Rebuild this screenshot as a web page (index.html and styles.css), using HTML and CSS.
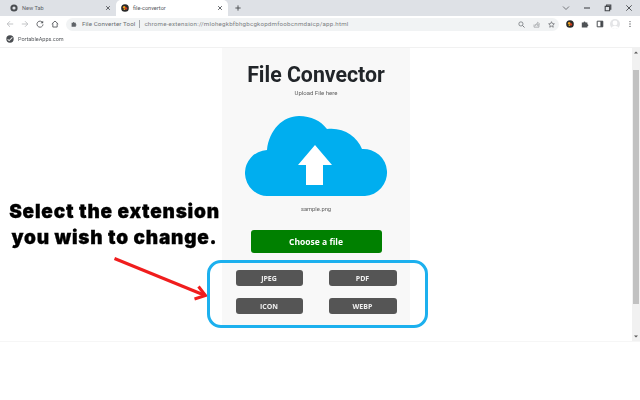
FILE: index.html
```html
<!DOCTYPE html>
<html lang="en">
<head>
<meta charset="utf-8">
<title>file-convertor</title>
<link rel="stylesheet" href="styles.css">
</head>
<body>
<div class="shot">
  <div class="tabstrip">
    <div class="tab">
      <svg class="fav" viewBox="0 0 10 10"><circle cx="5" cy="5" r="4.5" fill="#4a4d51"/><circle cx="5" cy="5" r="2" fill="#dee1e6"/></svg>
      <span class="tab-title">New Tab</span>
      <svg class="tab-x" viewBox="0 0 8 8"><path d="M1.5 1.5l5 5M6.5 1.5l-5 5" stroke="#55585c" stroke-width="1.2"/></svg>
    </div>
    <div class="tab tab-active">
      <svg class="fav" viewBox="0 0 10 10"><circle cx="5" cy="5" r="4.8" fill="#2a2a2a"/><circle cx="4" cy="4" r="1.6" fill="#f0a020"/><circle cx="6.2" cy="5.5" r="1.5" fill="#d63a1e"/><circle cx="4.2" cy="6.6" r="1" fill="#e8c020"/></svg>
      <span class="tab-title">file-convertor</span>
      <svg class="tab-x" viewBox="0 0 8 8"><path d="M1.5 1.5l5 5M6.5 1.5l-5 5" stroke="#55585c" stroke-width="1.2"/></svg>
    </div>
    <svg class="newtab" viewBox="0 0 8 8"><path d="M4 .5v7M.5 4h7" stroke="#44474b" stroke-width="1.2"/></svg>
    <div class="win">
      <svg viewBox="0 0 8 8"><path d="M1 2.5l3 3 3-3" fill="none" stroke="#66696d" stroke-width=".9"/></svg>
      <svg viewBox="0 0 8 8"><path d="M1 4h6" stroke="#44474b" stroke-width="1.1"/></svg>
      <svg viewBox="0 0 8 8"><path d="M1.2 2.4h4.4v4.4H1.2zM2.6 2.2V1h4.2v4.2H5.8" fill="none" stroke="#44474b" stroke-width="1.1"/></svg>
      <svg viewBox="0 0 8 8"><path d="M1.3 1.3l5.4 5.4M6.7 1.3l-5.4 5.4" stroke="#44474b" stroke-width=".9"/></svg>
    </div>
  </div>
  <div class="toolbar">
    <svg class="nav" viewBox="0 0 10 10"><path d="M9 5H1.5M5 1.5L1.5 5 5 8.500" fill="none" stroke="#b4b6b9" stroke-width="1"/></svg>
    <svg class="nav" viewBox="0 0 10 10"><path d="M1 5h7.500M5 1.500L8.500 5 5 8.500" fill="none" stroke="#b4b6b9" stroke-width="1"/></svg>
    <svg class="nav" viewBox="0 0 10 10"><path d="M8.300 3.300A3.800 3.800 0 1 0 8.800 5.500" fill="none" stroke="#55585c" stroke-width="1.100"/><path d="M9 .8v3.400H5.600z" fill="#55585c"/></svg>
    <svg class="nav" viewBox="0 0 10 10"><path d="M1 5L5 1.300 9 5M2.300 4.200V8.800h5.400V4.200" fill="none" stroke="#55585c" stroke-width="1.100"/></svg>
    <div class="omnibox">
      <svg class="omni-ext" viewBox="0 0 10 10"><path d="M1 3h2.200a1.200 1.200 0 0 1 2.400 0H8v2.300a1.200 1.200 0 0 1 0 2.400V9.500H1z" fill="#5f6368"/></svg>
      <span class="omni-name">File Converter Tool</span>
      <span class="omni-sep"></span>
      <span class="omni-url">chrome-extension://mlohegkbfbhgbcgkopdmfoobcnmdaicp/app.html</span>
      <svg class="omni-ic" viewBox="0 0 10 10"><circle cx="4.200" cy="4.200" r="3" fill="none" stroke="#666a6e" stroke-width="1"/><path d="M6.500 6.500L9.300 9.300" stroke="#666a6e" stroke-width="1.200"/></svg>
      <svg class="omni-ic" viewBox="0 0 10 10"><path d="M1.500 5v3.800h7V5" fill="none" stroke="#8b8e92" stroke-width=".9"/><path d="M3 6.500C3.500 4.500 5 3.500 6.500 3.500V1.800L9.500 4.200 6.500 6.600V5C5 5 4 5.500 3 6.500z" fill="none" stroke="#8b8e92" stroke-width=".8"/></svg>
      <svg class="omni-ic" viewBox="0 0 10 10"><path d="M5 1l1.200 2.700 2.900.3-2.200 2 .6 2.900L5 7.400 2.500 8.900l.6-2.900-2.200-2 2.900-.3z" fill="none" stroke="#55585c" stroke-width=".9"/></svg>
    </div>
    <svg class="tool t1" viewBox="0 0 10 10"><circle cx="5" cy="5" r="4.800" fill="#2a2a2a"/><circle cx="4" cy="4" r="1.600" fill="#f0a020"/><circle cx="6.200" cy="5.500" r="1.500" fill="#d63a1e"/><circle cx="4.200" cy="6.600" r="1" fill="#e8c020"/></svg>
    <svg class="tool t2" viewBox="0 0 10 10"><path d="M1 3h2.200a1.200 1.200 0 0 1 2.400 0H8v2.300a1.200 1.200 0 0 1 0 2.400V9.500H1z" fill="#4f5256"/></svg>
    <svg class="tool t3" viewBox="0 0 10 10"><path d="M1.500 1.500h7v7h-7z" fill="none" stroke="#44474b" stroke-width="1.200"/><path d="M5.500 1.500h3v7h-3z" fill="#44474b"/></svg>
    <svg class="tool t4" viewBox="0 0 10 10"><circle cx="5" cy="5" r="5" fill="#e4e5e7"/><circle cx="5" cy="4" r="2.400" fill="#fff"/><path d="M1.500 8.500c1-2 6-2 7 0a5 5 0 0 1-7 0z" fill="#fff"/></svg>
    <svg class="tool t5" viewBox="0 0 4 10"><circle cx="2" cy="2" r=".8" fill="#55585c"/><circle cx="2" cy="5" r=".8" fill="#55585c"/><circle cx="2" cy="8" r=".8" fill="#55585c"/></svg>
  </div>
  <div class="bookmarks">
    <svg class="fav" viewBox="0 0 10 10"><circle cx="5" cy="5" r="4.600" fill="#4a4d51"/><path d="M2 5.500l2 1.500 4-4" fill="none" stroke="#e8e8e8" stroke-width="1.300"/></svg>
    <span class="bm-title">PortableApps.com</span>
  </div>
  <div class="page">
    <div class="content">
      <main class="panel">
        <h1 class="title">File Convector</h1>
        <p class="sub">Upload File here</p>
        <svg class="cloud" viewBox="0 0 143 80">
          <path d="M24 80A23 23 0 0 1 22 34C24 14 38 0 54 0C66 0 76 5 82 13C98 11 112 20 117 33A23.500 23.500 0 0 1 120 80Z" fill="#00aeef"/>
          <path d="M70 29L87 49H78V69H61V49H53Z" fill="#fff"/>
        </svg>
        <p class="filename">sample.png</p>
        <button class="choose">Choose a file</button>
        <div class="formats">
          <button class="fmt">JPEG</button>
          <button class="fmt">PDF</button>
          <button class="fmt">ICON</button>
          <button class="fmt">WEBP</button>
        </div>
      </main>
    </div>
    <div class="scrollbar">
      <svg class="sb-arrow" viewBox="0 0 6 4"><path d="M3 .5L6 3.500H0z" fill="#555"/></svg>
      <div class="sb-track"><div class="sb-thumb"></div></div>
      <svg class="sb-arrow" viewBox="0 0 6 4"><path d="M3 3.500L6 .5H0z" fill="#555"/></svg>
    </div>
  </div>
  <div class="note">Select the extension<br>you wish to change.</div>
  <svg class="pointer" viewBox="0 0 640 400"><path d="M114.500 258.500L204 295" stroke="#f01d1d" stroke-width="3" fill="none"/><path d="M198.500 286.500L205.500 295.500L194.500 299" stroke="#f01d1d" stroke-width="3" fill="none"/></svg>
  <div class="ring"></div>
</div>
</body>
</html>
```

FILE: styles.css
```css
* { box-sizing: border-box; }
html, body { margin: 0; padding: 0; }
body { width: 640px; height: 400px; overflow: hidden; background: #fff; font-family: Roboto, "Liberation Sans", sans-serif; }
.shot { position: relative; width: 640px; height: 400px; display: flex; flex-direction: column; filter: blur(.3px); }

.tabstrip { height: 16px; background: #dee1e6; display: flex; align-items: center; padding-left: 8px; flex: none; }
.tab { width: 108px; height: 16px; display: flex; align-items: center; padding-left: 2px; gap: 4px; font-size: 5.600px; color: #5f6368; }
.tab-active { width: 112px; background: #fff; border-radius: 5px 5px 0 0; padding-left: 5px; color: #55585c; }
.fav { width: 8px; height: 8px; flex: none; }
.tab-title { flex: 1; }
.tab-x { width: 6px; height: 6px; margin-right: 5px; }
.newtab { width: 6px; height: 6px; margin-left: 7px; }
.win { margin-left: auto; display: flex; gap: 13px; padding-right: 7px; align-items: center; }
.win svg { width: 8px; height: 8px; }

.toolbar { height: 16px; background: #fff; display: flex; align-items: center; padding-left: 6px; flex: none; }
.nav { width: 8px; height: 8px; margin-right: 7px; flex: none; }
.omnibox { width: 493px; height: 13px; background: #f1f3f4; border-radius: 7px; display: flex; align-items: center; padding: 0 4.500px 0 5px; font-size: 6.200px; flex: none; }
.omni-ext { width: 6px; height: 6px; flex: none; }
.omni-name { margin-left: 5px; color: #6a6d71; letter-spacing: .1px; }
.omni-sep { width: 1px; height: 8px; background: #a6a9ad; margin: 0 4px; }
.omni-url { flex: 1; color: #7c7f83; white-space: nowrap; letter-spacing: .22px; }
.omni-ic { width: 7px; height: 7px; margin-left: 8px; flex: none; }
.tool { height: 8px; width: 8px; flex: none; }
.t1 { margin-left: 7px; }
.t2 { margin-left: 7px; }
.t3 { margin-left: 7px; }
.t4 { width: 10px; height: 10px; margin-left: 6px; }
.t5 { width: 4px; margin-left: 8px; }

.bookmarks { height: 14px; background: #fff; display: flex; align-items: center; padding-left: 6px; gap: 4px; flex: none; }
.bm-title { font-size: 5.500px; color: #55585c; }

.page { margin-top: 2px; height: 293px; display: flex; flex: none; box-shadow: 0 -1px 0 #f1f1f1, 0 1px 0 #f6f6f6; }
.content { flex: 1; display: flex; justify-content: center; align-items: flex-start; }
.panel { width: 188px; height: 278px; background: #f8f8f8; display: flex; flex-direction: column; align-items: center; }
.title { margin: 14px 0 0; font-family: Roboto, sans-serif; font-weight: 700; font-size: 21.300px; line-height: 26px; color: #212529; white-space: nowrap; }
.sub { margin: 1px 0 0; font-size: 6px; line-height: 8px; color: #606060; }
.cloud { width: 143px; height: 80px; margin-top: 19px; flex: none; }
.filename { margin: 9px 0 0; font-size: 5.800px; line-height: 8px; color: #606060; }
.choose { width: 131px; height: 23px; margin-top: 17px; flex: none; border: 0; border-radius: 3px; background: #008000; color: #fff; font-family: "Open Sans", sans-serif; font-weight: 700; font-size: 8.500px; padding: 0; }
.formats { margin-top: 17px; display: grid; grid-template-columns: 67px 68px; column-gap: 26px; row-gap: 12px; }
.fmt { height: 16px; border: 0; border-radius: 3px; background: #555; color: #f0f0f0; font-family: "Open Sans", sans-serif; font-weight: 700; font-size: 7px; padding: 0; }

.scrollbar { width: 8px; background: #f1f1f1; display: flex; flex-direction: column; align-items: center; }
.sb-arrow { width: 4px; height: 3px; margin: 3px 0; flex: none; }
.sb-track { flex: 1; padding-top: 13px; padding-bottom: 28px; width: 6px; }
.sb-thumb { height: 100%; background: #c1c1c1; }

.note { position: absolute; left: 0; top: 199px; width: 229px; text-align: center; font-family: Inter, sans-serif; font-weight: 900; font-size: 19px; line-height: 26px; letter-spacing: .8px; color: #000; -webkit-text-stroke: .3px #000; }
.pointer { position: absolute; left: 0; top: 0; width: 640px; height: 400px; }
.ring { position: absolute; left: 207px; top: 260px; width: 221px; height: 68px; border: 3px solid #1cb0ee; border-radius: 14px; }
```
